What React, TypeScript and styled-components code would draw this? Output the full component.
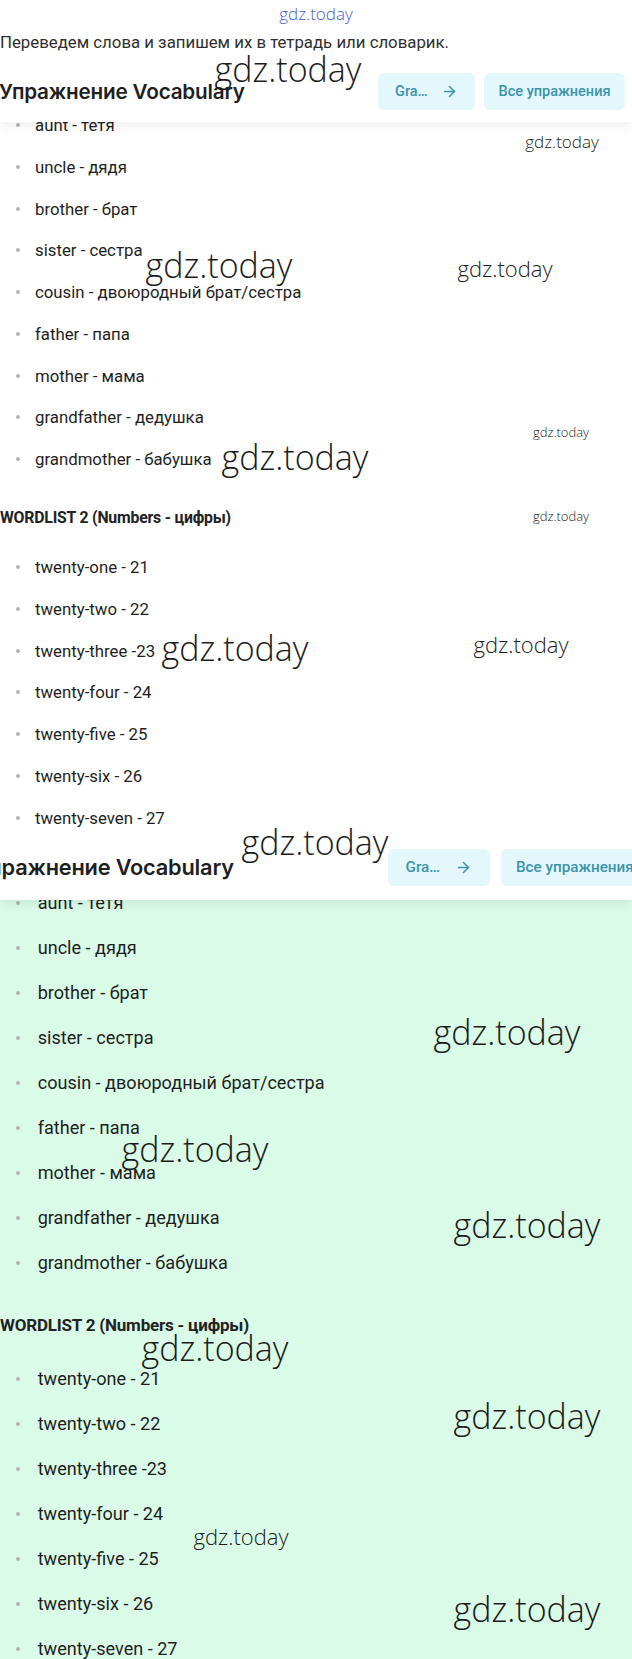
import React from "react";
import styled, { createGlobalStyle } from "styled-components";
import { ArrowRight } from "lucide-react";

const GlobalStyle = createGlobalStyle`
  html, body {
    margin: 0;
    padding: 0;
    background: #ffffff;
  }
  body {
    overflow-x: hidden;
    font-family: Roboto, "Liberation Sans", sans-serif;
    color: #2b2b2b;
  }
`;

const family = [
  "aunt - тетя",
  "uncle - дядя",
  "brother - брат",
  "sister - сестра",
  "cousin - двоюродный брат/сестра",
  "father - папа",
  "mother - мама",
  "grandfather - дедушка",
  "grandmother - бабушка",
];

const numbers = [
  "twenty-one - 21",
  "twenty-two - 22",
  "twenty-three -23",
  "twenty-four - 24",
  "twenty-five - 25",
  "twenty-six - 26",
  "twenty-seven - 27",
];

type Mark = { x: number; y: number; size: number; blue?: boolean };

const marks: Mark[] = [
  { x: 316, y: 13, size: 17, blue: true },
  { x: 288, y: 69, size: 34 },
  { x: 562, y: 141, size: 17 },
  { x: 219, y: 265, size: 34 },
  { x: 505, y: 268, size: 22 },
  { x: 561, y: 432, size: 13 },
  { x: 295, y: 457, size: 34 },
  { x: 561, y: 516, size: 13 },
  { x: 235, y: 648, size: 34 },
  { x: 521, y: 644, size: 22 },
  { x: 315, y: 842, size: 34 },
  { x: 507, y: 1032, size: 34 },
  { x: 195, y: 1149, size: 34 },
  { x: 527, y: 1225, size: 34 },
  { x: 215, y: 1348, size: 34 },
  { x: 527, y: 1416, size: 34 },
  { x: 241, y: 1536, size: 22 },
  { x: 527, y: 1609, size: 34 },
];

type PanelProps = {
  k: number;
  head: number;
  shift: number;
  edge: number;
  green?: boolean;
  intro?: boolean;
};

const Panel = ({ k, head, shift, edge, green, intro }: PanelProps) => (
  <Section>
    {intro && <Intro>Переведем слова и запишем их в тетрадь или словарик.</Intro>}
    <Bar $top={intro ? 16 : 8} $bottom={intro ? 12 : 14}>
      <Title $k={head} $shift={shift}>Упражнение Vocabulary</Title>
      <Actions $edge={edge} $gap={intro ? 9 : 11}>
        <Chip $k={head} $w={97} $spread>
          <span>Gra…</span>
          <ArrowRight size={17} strokeWidth={2.2} />
        </Chip>
        <Chip $k={head} $w={141}>Все упражнения</Chip>
      </Actions>
    </Bar>
    <Body $green={green}>
      <List $k={k} $lift>
        {family.map((w) => (
          <Item key={w} $k={k}>{w}</Item>
        ))}
      </List>
      <Subhead $k={k}>WORDLIST 2 (Numbers - цифры)</Subhead>
      <List $k={k}>
        {numbers.map((w) => (
          <Item key={w} $k={k}>{w}</Item>
        ))}
      </List>
    </Body>
  </Section>
);

export default function App() {
  return (
    <Page>
      <GlobalStyle />
      <Panel k={1} head={1} shift={-1} edge={7} intro />
      <Panel k={1.077} head={1.052} shift={-25} edge={-17} green />
      {marks.map((m, i) => (
        <Watermark
          key={i}
          $size={m.size}
          $blue={m.blue}
          style={{ left: m.x, top: m.y }}
        >
          gdz.today
        </Watermark>
      ))}
    </Page>
  );
}

const Page = styled.div`
  position: relative;
  width: 632px;
  min-height: 1659px;
  overflow: hidden;
  padding-top: 30px;
  box-sizing: border-box;
`;

const Section = styled.section`
  display: flex;
  flex-direction: column;
`;

const Intro = styled.p`
  margin: 0 0 3px;
  font-size: 16.8px;
  line-height: 24px;
  color: #2f2f2f;
`;

const Bar = styled.header<{ $top: number; $bottom: number }>`
  position: relative;
  z-index: 2;
  display: flex;
  align-items: center;
  padding: ${(p) => p.$top}px 0 ${(p) => p.$bottom}px;
  background: #ffffff;
  box-shadow: 0 5px 9px rgba(0, 0, 0, 0.06);
`;

const Title = styled.h2<{ $k: number; $shift: number }>`
  margin: 0 0 0 ${(p) => p.$shift}px;
  font-family: Inter, Roboto, sans-serif;
  font-size: ${(p) => 20.7 * p.$k}px;
  font-weight: 600;
  letter-spacing: -0.2px;
  white-space: nowrap;
  color: #1f1f1f;
`;

const Actions = styled.div<{ $edge: number; $gap: number }>`
  display: flex;
  gap: ${(p) => p.$gap}px;
  margin-left: auto;
  margin-right: ${(p) => p.$edge}px;
  flex-shrink: 0;
`;

const Chip = styled.button<{ $k: number; $w: number; $spread?: boolean }>`
  display: flex;
  align-items: center;
  justify-content: ${(p) => (p.$spread ? "space-between" : "center")};
  box-sizing: border-box;
  width: ${(p) => p.$w * p.$k}px;
  height: 37px;
  margin: 0;
  padding: 0 ${(p) => 17 * p.$k}px;
  border: none;
  border-radius: 6px;
  background: #e4f8fc;
  color: #3b93ad;
  font-family: Roboto, sans-serif;
  font-size: ${(p) => 14.5 * p.$k}px;
  font-weight: 500;
  white-space: nowrap;
  cursor: pointer;
`;

const Body = styled.div<{ $green?: boolean }>`
  background: ${(p) => (p.$green ? "#d9fbe8" : "#ffffff")};
  padding-bottom: 2px;
`;

const List = styled.ul<{ $k: number; $lift?: boolean }>`
  list-style: none;
  margin: ${(p) => (p.$lift ? -17.9 * p.$k : 0)}px 0 0;
  padding: 0;
`;

const Item = styled.li<{ $k: number }>`
  position: relative;
  padding: ${(p) => 8.9 * p.$k}px 0 ${(p) => 8.9 * p.$k}px ${(p) => 35 * p.$k}px;
  font-size: ${(p) => 16.8 * p.$k}px;
  line-height: ${(p) => 24 * p.$k}px;
  font-weight: 400;
  color: #1e1e1e;

  &::before {
    content: "";
    position: absolute;
    left: 16px;
    top: 50%;
    width: 4px;
    height: 4px;
    margin-top: -2px;
    border-radius: 50%;
    background: #b4b4b4;
  }
`;

const Subhead = styled.h3<{ $k: number }>`
  margin: ${(p) => 25.4 * p.$k}px 0 ${(p) => 16.6 * p.$k}px;
  font-family: Roboto, sans-serif;
  font-size: ${(p) => 15.8 * p.$k}px;
  line-height: ${(p) => 24 * p.$k}px;
  font-weight: 700;
  letter-spacing: -0.2px;
  color: #222;
`;

const Watermark = styled.span<{ $size: number; $blue?: boolean }>`
  position: absolute;
  z-index: 5;
  transform: translate(-50%, -50%);
  font-family: "Open Sans", sans-serif;
  font-weight: 300;
  font-size: ${(p) => p.$size}px;
  line-height: 1;
  white-space: nowrap;
  color: ${(p) => (p.$blue ? "#4b5bd6" : "#1c1c1c")};
  pointer-events: none;
`;
